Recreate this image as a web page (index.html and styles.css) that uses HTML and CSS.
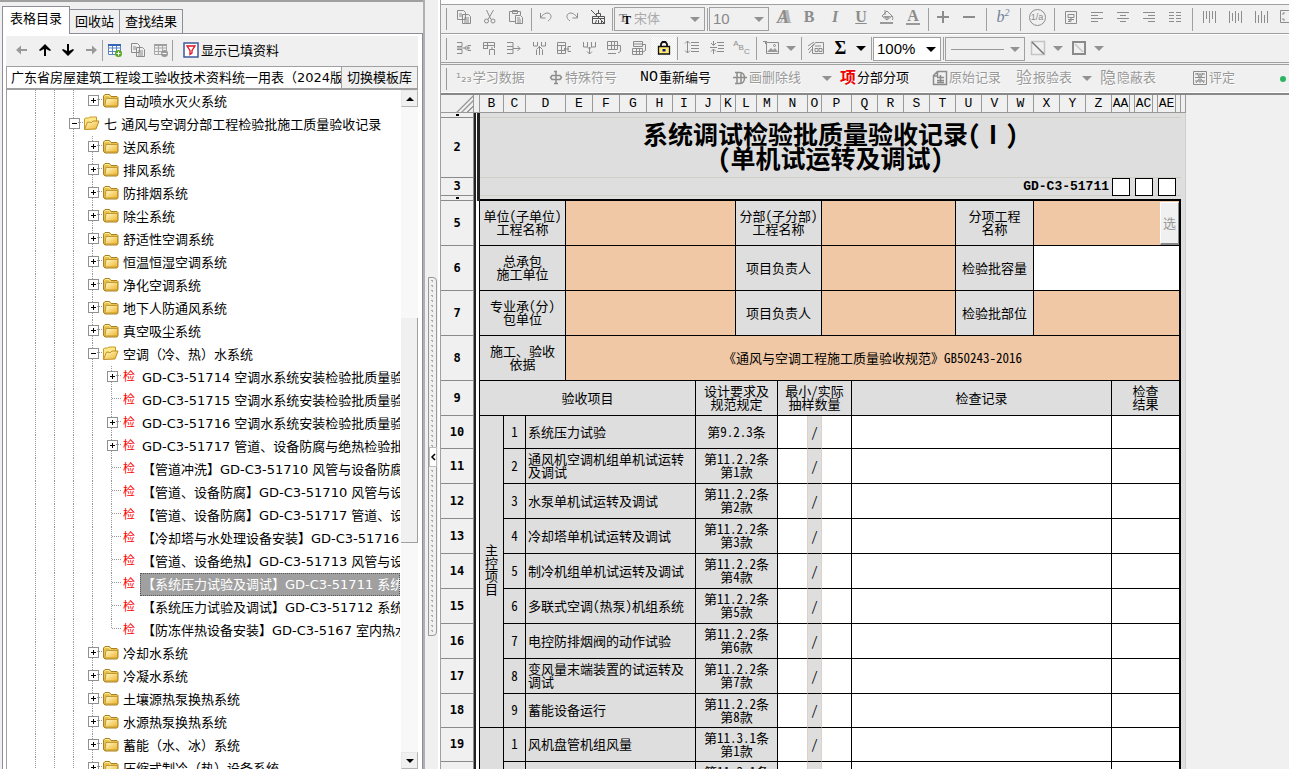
FILE: index.html
```
<!DOCTYPE html>
<html lang="zh-CN">
<head>
<meta charset="utf-8">
<title>系统调试检验批质量验收记录</title>
<link rel="stylesheet" href="styles.css">
</head>
<body>
<svg class="sprite" aria-hidden="true">
  <defs>
    <linearGradient id="gold" x1="0" y1="0" x2="1" y2="1"><stop offset="0" stop-color="#fffbd0"/><stop offset="1" stop-color="#f0b428"/></linearGradient>
  </defs>
  <symbol id="folder" viewBox="0 0 17 15"><path d="M1.500 12.500V3L3 1.500h4.500L9 3.500h6l1 1v8l-1 1.500H3z" fill="#e8c04c" stroke="#a88020"/><path d="M4 5.500h11.500v7.500H3z" fill="url(#gold)" stroke="#c49a30"/><path d="M2.500 3.500L3.500 2.500h3.500l1.500 2" fill="none" stroke="#fff0a0"/></symbol>
  <symbol id="open" viewBox="0 0 17 15"><path d="M1.500 13V3L2.500 2h3l1.500-1h6.500v4" fill="#ffe88a" stroke="#c79a26"/><path d="M1.500 13.500l3-7.500 4 .5 1.500-1.500h6l-3 8z" fill="url(#gold)" stroke="#c08f20"/></symbol>
  <symbol id="left" viewBox="0 0 16 16"><path d="M2 8l5-4.500V7h6v2H7v3.500z" fill="currentColor"/></symbol>
  <symbol id="right" viewBox="0 0 16 16"><path d="M14 8L9 3.500V7H3v2h6v3.500z" fill="currentColor"/></symbol>
  <symbol id="up" viewBox="0 0 16 16"><path d="M8 2L2 8l1 1 4-2v7h2V7l4 2 1-1z" fill="currentColor"/></symbol>
  <symbol id="down" viewBox="0 0 16 16"><path d="M8 14L2 8l1-1 4 2V2h2v7l4-2 1 1z" fill="currentColor"/></symbol>
  <symbol id="gridadd" viewBox="0 0 16 16"><path d="M1.500 2.500h12v10h-12zM1.500 6h12M1.500 9.500h12M5.500 3v10M9.500 3v10" fill="#fff" stroke="#5c83c4"/><path d="M1 2h13v2H1z" fill="#3565b4"/><circle cx="11.500" cy="11.500" r="3.500" fill="#56a820"/><path d="M9.500 11.500h4M11.500 9.500v4" stroke="#fff"/></symbol>
  <symbol id="gridsub" viewBox="0 0 16 16"><path d="M1.500 2.500h12v10h-12zM1.500 6h12M1.500 9.500h12M5.500 3v10M9.500 3v10" fill="none" stroke="#a8a8a8"/><path d="M1 2h13v2H1z" fill="#a0a0a0"/><circle cx="11.500" cy="11.500" r="3.500" fill="#999"/><path d="M9.500 11.500h4" stroke="#fff"/></symbol>
  <symbol id="funnel" viewBox="0 0 16 16"><path d="M1 1h14v14H1z" fill="#fff" stroke="#3e5a9c" stroke-width="1.500"/><path d="M4 4h8L9 8.500V11l-2 1.500v-4z" fill="none" stroke="#e01020" stroke-width="1.300"/></symbol>
  <symbol id="copy" viewBox="0 0 16 16"><path d="M1.500 1.500h6l2 2v7h-8zM6.500 5.500h6l2 2v7h-8z" class="ln pf"/><path d="M3 5h3M3 7h3M8 9h5M8 11h5M8 13h5" class="ln"/></symbol>
  <symbol id="cut" viewBox="0 0 16 16"><path d="M4.500 1l4.500 9.500M11.500 1L6 10.500" class="ln"/><circle cx="4.500" cy="12" r="2" class="ln"/><circle cx="11" cy="12" r="2" class="ln"/></symbol>
  <symbol id="paste" viewBox="0 0 16 16"><path d="M7 12.500H1.500v-10h11V6M4.500 1.500h5v3h-5z" class="ln"/><path d="M7.500 6.500h5l2 2v6h-7zM9 9h3M9 11h4M9 13h4" class="ln"/></symbol>
  <symbol id="undo" viewBox="0 0 16 16"><path d="M2.500 4v5h5M3 8c3-4 7-5 9-3s1 5-2 7" class="ln"/></symbol>
  <symbol id="redo" viewBox="0 0 16 16"><path d="M13.500 4v5h-5M13 8c-3-4-7-5-9-3s-1 5 2 7" class="ln"/></symbol>
  <symbol id="clear" viewBox="0 0 16 16"><path d="M2.500 14.500v-7h12v7zM6.500 7.500v-3h4v3M8.500 1v4M2 9.500h12M5.500 14l1-3M8.500 14v-3M11.500 14v-3M1 1l14 14" class="dk"/></symbol>
  <symbol id="bucket" viewBox="0 0 16 16"><path d="M3 7l5-5 5 5-5 4zM6 1v5M12 6c2 1 2 3 1.500 5" class="ln"/><path d="M4 7h8l-4 3zM1 13h13v2H1z" fill="#999"/></symbol>
  <symbol id="plus" viewBox="0 0 16 16"><path d="M2 8h12M8 2v12" class="ln w2"/></symbol>
  <symbol id="minus" viewBox="0 0 16 16"><path d="M2 8h12" class="ln w2"/></symbol>
  <symbol id="wrap" viewBox="0 0 16 16"><path d="M2.500 2.500h11v12h-11zM5 5.500h6v3H5zM5 10.500h6M8 8.500v4l-2-1M5 12.500h2" class="ln"/></symbol>
  <symbol id="al" viewBox="0 0 16 16"><path d="M2 3.500h12M2 6.500h7M2 9.500h12M2 12.500h7" class="ln"/></symbol>
  <symbol id="ac" viewBox="0 0 16 16"><path d="M2 3.500h12M5 6.500h6M2 9.500h12M5 12.500h6" class="ln"/></symbol>
  <symbol id="ar" viewBox="0 0 16 16"><path d="M2 3.500h12M7 6.500h7M2 9.500h12M7 12.500h7" class="ln"/></symbol>
  <symbol id="aj" viewBox="0 0 16 16"><path d="M2 3.500h5M9 3.500h5M2 6.500h5M9 6.500h5M2 9.500h5M9 9.500h5M2 12.500h5M9 12.500h5" class="ln"/></symbol>
  <symbol id="vt" viewBox="0 0 16 16"><path d="M2.500 2v12M5.500 2v8M8.500 2v12M11.500 2v8M14.500 2v12" class="ln"/></symbol>
  <symbol id="vm" viewBox="0 0 16 16"><path d="M2.500 2v12M5.500 4v8M8.500 2v12M11.500 4v8M14.500 2v12" class="ln"/></symbol>
  <symbol id="vb" viewBox="0 0 16 16"><path d="M2.500 2v12M5.500 6v8M8.500 2v12M11.500 6v8M14.500 2v12" class="ln"/></symbol>
  <symbol id="fit" viewBox="0 0 16 16"><path d="M1.500 1.500h13v12h-13zM4 6V4h2M10 4h2v2M4 9v2h2" class="ln"/></symbol>
  <symbol id="rowins" viewBox="0 0 16 16"><path d="M1 2.500h5v4H1M1 13.500h5v-4H1M1 8h13M11 5.500L8.500 8 11 10.500M15 5.500h-3v5h3" class="ln"/></symbol>
  <symbol id="colins" viewBox="0 0 16 16"><path d="M2.500 8V2.500h11V8M2 5.500h12M6.500 3v5M2 8.500h5M8.500 15V9.500h5V15M11 9V7" class="ln"/></symbol>
  <symbol id="rowadd" viewBox="0 0 16 16"><path d="M1 2.500h6v4H1M1 13.500h6v-4H1M7 6.500v3M7 8.500h7M11.500 6L14 8.500 11.500 11" class="ln"/></symbol>
  <symbol id="coladd" viewBox="0 0 16 16"><path d="M2.500 2v4h4V2M10.500 2v4h4V2M8.500 6v9M6 9l2.500-2.500L11 9M5.500 15V9.500M11.500 15V9.500" class="ln"/></symbol>
  <symbol id="rowdel" viewBox="0 0 16 16"><path d="M1.500 2.500h8v11h-8zM2 5.500h7M2 10.500h7M5.500 6v7M15 6.500h-3v5h3M13 9H8l2-2M8 9l2 2" class="ln"/></symbol>
  <symbol id="coldel" viewBox="0 0 16 16"><path d="M2.500 2v5h4V2M10.500 2v5h4V2M6.500 7l2 2 2-2M8.500 7v7M6 11.500L8.500 14l2.500-2.500" class="ln"/></symbol>
  <symbol id="merge" viewBox="0 0 16 16"><path d="M1.500 1.500h10v8h-10zM1 5.500h11M5.500 2v7M8.500 2v7M2 13.500h8M12 5.500h2.500v6L12 13" class="ln"/></symbol>
  <symbol id="split" viewBox="0 0 16 16"><path d="M2.500 1.500h9v5h-9zM1.500 8.500h10v6h-10zM2 11.500h10M5.500 9v6M8.500 9v6M12 4.500h2.500v6L12 12M3 4h8" class="ln"/></symbol>
  <symbol id="lock" viewBox="0 0 16 16"><path d="M5 7V4l1.500-2h3L11 4v3" fill="none" stroke="#111" stroke-width="1.800"/><path d="M2.500 6.500h11v7.500h-11z" fill="#ffec70" stroke="#111" stroke-width="1.300"/><path d="M6.500 9h3v2.500h-3z" fill="#14148c"/></symbol>
  <symbol id="sp1" viewBox="0 0 16 16"><path d="M3.500 1v12M1 3.500L3.500 1 6 3.500M1 10.500L3.500 13 6 10.500M7 2.500h8M7 5.500h8M7 8.500h8M7 11.500h8" class="ln"/></symbol>
  <symbol id="sp2" viewBox="0 0 16 16"><path d="M4.500 1v4M2 3l2.500 2.500L7 3M4.500 14V9M2 11.500L4.500 9 7 11.500M1 7.500h7M8 2.500h7M9 5.500h6M9 8.500h6M8 11.500h7" class="ln"/></symbol>
  <symbol id="pic" viewBox="0 0 18 16"><path d="M1 1.500h4M3.500 1v3M4.500 2.500h12v11h-12z" class="ln"/><path d="M5 12l4-4 2 2 2-2 3 4z" fill="#999"/><circle cx="12.500" cy="5.500" r="1" class="ln"/></symbol>
  <symbol id="form" viewBox="0 0 18 16"><path d="M5.500 6.500l3-4h8v11h-11zM8 6h6M8 8.500h3v3H8zM12 8.500h3v3h-3zM1 6l6-4M1 10l6-6M2 13l4-5" class="ln"/></symbol>
  <symbol id="diag" viewBox="0 0 16 16"><path d="M1.500 1.500h13v13h-13z" fill="none" stroke="#c4c4c4" stroke-width="1.500"/><path d="M2 2l12 12" stroke="#777" stroke-width="1.500"/></symbol>
  <symbol id="bord" viewBox="0 0 16 16"><path d="M2 2h12v12H2z" fill="none" stroke="#8a8a8a" stroke-width="2"/><path d="M4 4l8 8" stroke="#c4c4c4" stroke-width="1.500"/></symbol>
  <symbol id="phi" viewBox="0 0 16 16"><path d="M4 5.500h8l1.500 2-1.500 2H4l-1.500-2zM8 1v13M6 1.500h3M6 13.500h4" class="ln w15"/></symbol>
  <symbol id="del" viewBox="0 0 16 16"><path d="M3 2.500h5c6 0 6 11 0 11H3M5 2.500v11M9 3v10M1 7.500h14" class="ln w15"/></symbol>
  <symbol id="doc" viewBox="0 0 16 16"><path d="M5.500 1.500h9v13h-13v-9zM5.500 2v4H2M5 7.500h7M5 10.500h7M8.500 5v8M5 12.500h7" class="ln w15"/></symbol>
  <symbol id="eval" viewBox="0 0 16 16"><path d="M1.500 1.500h13v13h-13zM3 4h10M3 7.500h10M3 11h10M5 3l2 4M11 3L9 7M8 4v9M4 13l3-4M12 13l-3-4" class="ln"/></symbol>
</svg>

<div class="app">
  <aside class="side">
    <nav class="tabs">
      <button class="tab on">表格目录</button><button class="tab">回收站</button><button class="tab">查找结果</button>
    </nav>
    <div class="pane">
      <div class="treebar">
        <button class="nb off" aria-label="后退"><svg><use href="#left"/></svg></button>
        <button class="nb" aria-label="上移"><svg><use href="#up"/></svg></button>
        <button class="nb" aria-label="下移"><svg><use href="#down"/></svg></button>
        <button class="nb off" aria-label="前进"><svg><use href="#right"/></svg></button>
        <i class="bar"></i>
        <button class="nb" aria-label="新增表格"><svg><use href="#gridadd"/></svg></button>
        <button class="nb off" aria-label="复制表格"><svg><use href="#copy"/></svg></button>
        <button class="nb" aria-label="删除表格"><svg><use href="#gridsub"/></svg></button>
        <i class="bar"></i>
        <button class="filter"><svg><use href="#funnel"/></svg>显示已填资料</button>
      </div>
      <div class="lib">
        <input type="text" readonly aria-label="模板库" value="广东省房屋建筑工程竣工验收技术资料统一用表（2024版）">
        <button>切换模板库</button>
      </div>
      <div class="treebox">
        <ul class="tree">
          <li class="d3 end"><button class="tog plus" aria-label="展开"></button><svg class="ic"><use href="#folder"/></svg><span class="lb">自动喷水灭火系统</span></li>
          <li class="d2"><button class="tog" aria-label="收起"></button><svg class="ic"><use href="#open"/></svg><span class="lb">七 通风与空调分部工程检验批施工质量验收记录</span></li>
          <li class="d3"><button class="tog plus" aria-label="展开"></button><svg class="ic"><use href="#folder"/></svg><span class="lb">送风系统</span></li>
          <li class="d3"><button class="tog plus" aria-label="展开"></button><svg class="ic"><use href="#folder"/></svg><span class="lb">排风系统</span></li>
          <li class="d3"><button class="tog plus" aria-label="展开"></button><svg class="ic"><use href="#folder"/></svg><span class="lb">防排烟系统</span></li>
          <li class="d3"><button class="tog plus" aria-label="展开"></button><svg class="ic"><use href="#folder"/></svg><span class="lb">除尘系统</span></li>
          <li class="d3"><button class="tog plus" aria-label="展开"></button><svg class="ic"><use href="#folder"/></svg><span class="lb">舒适性空调系统</span></li>
          <li class="d3"><button class="tog plus" aria-label="展开"></button><svg class="ic"><use href="#folder"/></svg><span class="lb">恒温恒湿空调系统</span></li>
          <li class="d3"><button class="tog plus" aria-label="展开"></button><svg class="ic"><use href="#folder"/></svg><span class="lb">净化空调系统</span></li>
          <li class="d3"><button class="tog plus" aria-label="展开"></button><svg class="ic"><use href="#folder"/></svg><span class="lb">地下人防通风系统</span></li>
          <li class="d3"><button class="tog plus" aria-label="展开"></button><svg class="ic"><use href="#folder"/></svg><span class="lb">真空吸尘系统</span></li>
          <li class="d3"><button class="tog" aria-label="收起"></button><svg class="ic"><use href="#open"/></svg><span class="lb">空调（冷、热）水系统</span></li>
          <li class="d4"><button class="tog plus" aria-label="展开"></button><span class="jian">检</span><span class="lb">GD-C3-51714 空调水系统安装检验批质量验收记录</span></li>
          <li class="d4"><span class="tog leaf"></span><span class="jian">检</span><span class="lb">GD-C3-51715 空调水系统安装检验批质量验收记录</span></li>
          <li class="d4"><button class="tog plus" aria-label="展开"></button><span class="jian">检</span><span class="lb">GD-C3-51716 空调水系统安装检验批质量验收记录</span></li>
          <li class="d4"><button class="tog plus" aria-label="展开"></button><span class="jian">检</span><span class="lb">GD-C3-51717 管道、设备防腐与绝热检验批质量验收记录</span></li>
          <li class="d4"><span class="tog leaf"></span><span class="jian">检</span><span class="lb">【管道冲洗】GD-C3-51710 风管与设备防腐检验批</span></li>
          <li class="d4"><span class="tog leaf"></span><span class="jian">检</span><span class="lb">【管道、设备防腐】GD-C3-51710 风管与设备防腐</span></li>
          <li class="d4"><span class="tog leaf"></span><span class="jian">检</span><span class="lb">【管道、设备防腐】GD-C3-51717 管道、设备防腐</span></li>
          <li class="d4"><span class="tog leaf"></span><span class="jian">检</span><span class="lb">【冷却塔与水处理设备安装】GD-C3-51716 空调水系统</span></li>
          <li class="d4"><span class="tog leaf"></span><span class="jian">检</span><span class="lb">【管道、设备绝热】GD-C3-51713 风管与设备绝热</span></li>
          <li class="d4"><span class="tog leaf"></span><span class="jian">检</span><span class="lb sel">【系统压力试验及调试】GD-C3-51711 系统调试</span></li>
          <li class="d4"><span class="tog leaf"></span><span class="jian">检</span><span class="lb">【系统压力试验及调试】GD-C3-51712 系统调试</span></li>
          <li class="d4 end"><span class="tog leaf"></span><span class="jian">检</span><span class="lb">【防冻伴热设备安装】GD-C3-5167 室内热水系统</span></li>
          <li class="d3"><button class="tog plus" aria-label="展开"></button><svg class="ic"><use href="#folder"/></svg><span class="lb">冷却水系统</span></li>
          <li class="d3"><button class="tog plus" aria-label="展开"></button><svg class="ic"><use href="#folder"/></svg><span class="lb">冷凝水系统</span></li>
          <li class="d3"><button class="tog plus" aria-label="展开"></button><svg class="ic"><use href="#folder"/></svg><span class="lb">土壤源热泵换热系统</span></li>
          <li class="d3"><button class="tog plus" aria-label="展开"></button><svg class="ic"><use href="#folder"/></svg><span class="lb">水源热泵换热系统</span></li>
          <li class="d3"><button class="tog plus" aria-label="展开"></button><svg class="ic"><use href="#folder"/></svg><span class="lb">蓄能（水、冰）系统</span></li>
          <li class="d3"><button class="tog plus" aria-label="展开"></button><svg class="ic"><use href="#folder"/></svg><span class="lb">压缩式制冷（热）设备系统</span></li>
        </ul>
        <div class="scroll">
          <button class="sb up" aria-label="向上滚动"></button>
          <div class="track"><div class="thumb"></div></div>
          <button class="sb" aria-label="向下滚动"></button>
        </div>
      </div>
    </div>
  </aside>

  <div class="splitter"><div class="grip"><button aria-label="折叠"><svg viewBox="0 0 6 8"><path d="M5 1L2 4l3 3" fill="none" stroke="#000" stroke-width="1.500"/></svg></button></div></div>

  <main class="main">
    <div class="tools">
      <div class="tb one">
        <i class="hd"></i>
        <button class="b" aria-label="复制"><svg><use href="#copy"/></svg></button>
        <button class="b" aria-label="剪切"><svg><use href="#cut"/></svg></button>
        <button class="b" aria-label="粘贴"><svg><use href="#paste"/></svg></button>
        <i class="sp s4"></i>
        <button class="b" aria-label="撤销"><svg><use href="#undo"/></svg></button>
        <button class="b" aria-label="重做"><svg><use href="#redo"/></svg></button>
        <button class="b" aria-label="清除"><svg><use href="#clear"/></svg></button>
        <i class="sp s3"></i>
        <span class="combo font"><b class="tt"><span>T</span><span>T</span></b><select disabled aria-label="字体"><option>宋体</option></select></span>
        <i class="sp s4"></i>
        <span class="combo size"><select disabled aria-label="字号"><option>10</option></select></span>
        <button class="b ch out">A</button>
        <button class="b ch">B</button>
        <button class="b ch it">I</button>
        <button class="b ch un">U</button>
        <button class="b" aria-label="填充色"><svg><use href="#bucket"/></svg></button>
        <button class="b ch ca"><span>A</span></button>
        <i class="sp s4"></i>
        <button class="b" aria-label="增大"><svg><use href="#plus"/></svg></button>
        <button class="b" aria-label="减小"><svg><use href="#minus"/></svg></button>
        <i class="sp s8"></i>
        <button class="b ch sup">b<sup>2</sup></button>
        <i class="sp s8"></i>
        <button class="b rnd"><span>1/a</span></button>
        <i class="sp s8"></i>
        <button class="b" aria-label="自动换行"><svg><use href="#wrap"/></svg></button>
        <button class="b" aria-label="左对齐"><svg><use href="#al"/></svg></button>
        <button class="b" aria-label="居中"><svg><use href="#ac"/></svg></button>
        <button class="b" aria-label="右对齐"><svg><use href="#ar"/></svg></button>
        <button class="b" aria-label="分散对齐"><svg><use href="#aj"/></svg></button>
        <i class="sp s8"></i>
        <button class="b" aria-label="顶端对齐"><svg><use href="#vt"/></svg></button>
        <button class="b" aria-label="垂直居中"><svg><use href="#vm"/></svg></button>
        <button class="b" aria-label="底端对齐"><svg><use href="#vb"/></svg></button>
        <button class="b" aria-label="自适应"><svg><use href="#fit"/></svg></button>
      </div>
      <div class="tb two">
        <i class="hd"></i>
        <button class="b" aria-label="插入行"><svg><use href="#rowins"/></svg></button>
        <button class="b" aria-label="插入列"><svg><use href="#colins"/></svg></button>
        <button class="b" aria-label="追加行"><svg><use href="#rowadd"/></svg></button>
        <button class="b" aria-label="追加列"><svg><use href="#coladd"/></svg></button>
        <button class="b" aria-label="删除行"><svg><use href="#rowdel"/></svg></button>
        <button class="b" aria-label="删除列"><svg><use href="#coldel"/></svg></button>
        <button class="b" aria-label="合并"><svg><use href="#merge"/></svg></button>
        <button class="b" aria-label="拆分"><svg><use href="#split"/></svg></button>
        <button class="b hat" aria-label="锁定"><svg><use href="#lock"/></svg></button>
        <i class="sp s3"></i>
        <button class="b" aria-label="增大行距"><svg><use href="#sp1"/></svg></button>
        <button class="b" aria-label="减小行距"><svg><use href="#sp2"/></svg></button>
        <button class="b abc"><span>A</span><span>B</span><span>C</span></button>
        <i class="sp s4"></i>
        <button class="b" aria-label="图片"><svg class="wide"><use href="#pic"/></svg></button>
        <button class="dd" aria-label="更多图片选项"></button>
        <i class="sp s4"></i>
        <button class="b" aria-label="表单"><svg class="wide"><use href="#form"/></svg></button>
        <button class="b sigma">Σ</button>
        <button class="dd blk" aria-label="更多函数"></button>
        <i class="sp s4"></i>
        <span class="combo zoom"><select aria-label="缩放"><option>100%</option></select></span>
        <i class="sp s4"></i>
        <span class="combo line"><select disabled aria-label="线型"><option></option></select></span>
        <button class="b" aria-label="斜线"><svg><use href="#diag"/></svg></button>
        <button class="dd" aria-label="更多斜线"></button>
        <button class="b" aria-label="边框"><svg><use href="#bord"/></svg></button>
        <button class="dd" aria-label="更多边框"></button>
      </div>
      <div class="tb three">
        <i class="hd"></i>
        <button class="t w92"><span class="n123">¹₂₃</span>学习数据</button>
        <button class="t w92"><svg><use href="#phi"/></svg>特殊符号</button>
        <button class="t act w92"><span class="no">NO</span>重新编号</button>
        <button class="t w92"><svg><use href="#del"/></svg>画删除线</button>
        <button class="dd" aria-label="更多删除线"></button>
        <button class="t act w92"><span class="big red">项</span>分部分项</button>
        <button class="t w84"><svg><use href="#doc"/></svg>原始记录</button>
        <button class="t w68"><span class="big">验</span>报验表</button>
        <button class="dd" aria-label="更多报验表"></button>
        <button class="t w92"><span class="big">隐</span>隐蔽表</button>
        <button class="t w68"><svg><use href="#eval"/></svg>评定</button>
        <i class="dot"></i>
      </div>
    </div>
    <div class="sheet">
      <table>
        <colgroup>
          <col class="c33"><col class="c6"><col class="c24"><col class="c22"><col class="c40"><col class="c27"><col class="c27"><col class="c27"><col class="c26"><col class="c23"><col class="c25"><col class="c15"><col class="c21"><col class="c21"><col class="c30"><col class="c14"><col class="c30">
          <col class="c26" span="10">
          <col class="c18"><col class="c5"><col class="c18"><col class="c5"><col class="c18"><col class="c5"><col class="c5">
        </colgroup>
        <thead>
          <tr class="hh"><th class="corner"></th><th></th><th>B</th><th>C</th><th>D</th><th>E</th><th>F</th><th>G</th><th>H</th><th>I</th><th>J</th><th>K</th><th>L</th><th>M</th><th>N</th><th>O</th><th>P</th><th>Q</th><th>R</th><th>S</th><th>T</th><th>U</th><th>V</th><th>W</th><th>X</th><th>Y</th><th>Z</th><th>AA</th><th></th><th>AC</th><th></th><th>AE</th><th></th><th></th></tr>
        </thead>
        <tbody>
          <tr class="h5"><th class="tiny"></th><td class="a top" rowspan="4"></td><td class="q" colspan="31"></td><td class="g"></td></tr>
          <tr class="h60"><th>2</th><td class="q title" colspan="31">系统调试检验批质量验收记录(Ⅰ)<br>(单机试运转及调试)</td><td class="g"></td></tr>
          <tr class="h18"><th>3</th><td class="q code" colspan="25">GD-C3-51711</td><td class="box"></td><td class="q"></td><td class="box"></td><td class="q"></td><td class="box"></td><td class="q"></td><td class="g"></td></tr>
          <tr class="h5"><th class="tiny"></th><td class="q thick" colspan="31"></td><td class="g"></td></tr>
          <tr class="h45"><th>5</th><td class="a"></td><td colspan="3">单位(子单位)<br>工程名称</td><td class="o" colspan="7"></td><td colspan="4">分部(子分部)<br>工程名称</td><td class="o" colspan="5"></td><td colspan="3">分项工程<br>名称</td><td class="o r pick" colspan="9"><button>选</button></td><td class="g"></td></tr>
          <tr class="h45"><th>6</th><td class="a"></td><td colspan="3">总承包<br>施工单位</td><td class="o" colspan="7"></td><td colspan="4">项目负责人</td><td class="o" colspan="5"></td><td colspan="3">检验批容量</td><td class="w r" colspan="9"></td><td class="g"></td></tr>
          <tr class="h45"><th>7</th><td class="a"></td><td colspan="3">专业承(分)<br>包单位</td><td class="o" colspan="7"></td><td colspan="4">项目负责人</td><td class="o" colspan="5"></td><td colspan="3">检验批部位</td><td class="o r" colspan="9"></td><td class="g"></td></tr>
          <tr class="h45"><th>8</th><td class="a"></td><td colspan="3">施工、验收<br>依据</td><td class="o r" colspan="28">《通风与空调工程施工质量验收规范》GB50243-2016</td><td class="g"></td></tr>
          <tr class="h35"><th>9</th><td class="a"></td><td colspan="8">验收项目</td><td colspan="4">设计要求及<br>规范规定</td><td colspan="3">最小/实际<br>抽样数量</td><td colspan="10">检查记录</td><td class="r" colspan="6">检查<br>结果</td><td class="g"></td></tr>
          <tr class="h33"><th>10</th><td class="a"></td><td rowspan="9"><span class="vert">主控项目</span></td><td>1</td><td class="l" colspan="6">系统压力试验</td><td colspan="4">第9.2.3条</td><td class="w n"></td><td class="n s">/</td><td class="w"></td><td class="w" colspan="10"></td><td class="w r" colspan="6"></td><td class="g"></td></tr>
          <tr class="h35"><th>11</th><td class="a"></td><td>2</td><td class="l" colspan="6">通风机空调机组单机试运转及调试</td><td colspan="4">第11.2.2条<br>第1款</td><td class="w n"></td><td class="n s">/</td><td class="w"></td><td class="w" colspan="10"></td><td class="w r" colspan="6"></td><td class="g"></td></tr>
          <tr class="h35"><th>12</th><td class="a"></td><td>3</td><td class="l" colspan="6">水泵单机试运转及调试</td><td colspan="4">第11.2.2条<br>第2款</td><td class="w n"></td><td class="n s">/</td><td class="w"></td><td class="w" colspan="10"></td><td class="w r" colspan="6"></td><td class="g"></td></tr>
          <tr class="h35"><th>13</th><td class="a"></td><td>4</td><td class="l" colspan="6">冷却塔单机试运转及调试</td><td colspan="4">第11.2.2条<br>第3款</td><td class="w n"></td><td class="n s">/</td><td class="w"></td><td class="w" colspan="10"></td><td class="w r" colspan="6"></td><td class="g"></td></tr>
          <tr class="h35"><th>14</th><td class="a"></td><td>5</td><td class="l" colspan="6">制冷机组单机试运转及调试</td><td colspan="4">第11.2.2条<br>第4款</td><td class="w n"></td><td class="n s">/</td><td class="w"></td><td class="w" colspan="10"></td><td class="w r" colspan="6"></td><td class="g"></td></tr>
          <tr class="h35"><th>15</th><td class="a"></td><td>6</td><td class="l" colspan="6">多联式空调(热泵)机组系统</td><td colspan="4">第11.2.2条<br>第5款</td><td class="w n"></td><td class="n s">/</td><td class="w"></td><td class="w" colspan="10"></td><td class="w r" colspan="6"></td><td class="g"></td></tr>
          <tr class="h35"><th>16</th><td class="a"></td><td>7</td><td class="l" colspan="6">电控防排烟阀的动作试验</td><td colspan="4">第11.2.2条<br>第6款</td><td class="w n"></td><td class="n s">/</td><td class="w"></td><td class="w" colspan="10"></td><td class="w r" colspan="6"></td><td class="g"></td></tr>
          <tr class="h35"><th>17</th><td class="a"></td><td>8</td><td class="l" colspan="6">变风量末端装置的试运转及调试</td><td colspan="4">第11.2.2条<br>第7款</td><td class="w n"></td><td class="n s">/</td><td class="w"></td><td class="w" colspan="10"></td><td class="w r" colspan="6"></td><td class="g"></td></tr>
          <tr class="h34"><th>18</th><td class="a"></td><td>9</td><td class="l" colspan="6">蓄能设备运行</td><td colspan="4">第11.2.2条<br>第8款</td><td class="w n"></td><td class="n s">/</td><td class="w"></td><td class="w" colspan="10"></td><td class="w r" colspan="6"></td><td class="g"></td></tr>
          <tr class="h34"><th>19</th><td class="a"></td><td rowspan="2"></td><td>1</td><td class="l" colspan="6">风机盘管机组风量</td><td colspan="4">第11.3.1条<br>第1款</td><td class="w n"></td><td class="n s">/</td><td class="w"></td><td class="w" colspan="10"></td><td class="w r" colspan="6"></td><td class="g"></td></tr>
          <tr class="h34"><th>20</th><td class="a"></td><td>2</td><td class="l" colspan="6"></td><td colspan="4">第11.3.1条<br>第2款</td><td class="w n"></td><td class="n s">/</td><td class="w"></td><td class="w" colspan="10"></td><td class="w r" colspan="6"></td><td class="g"></td></tr>
        </tbody>
      </table>
    </div>
  </main>
</div>
</body>
</html>
```
FILE: styles.css
```
* { box-sizing: border-box; }
html, body { height: 100%; margin: 0; overflow: hidden; }
body { background: #f0f0f0; color: #000; font: 13px/23px "DejaVu Sans", "Noto Sans CJK SC", sans-serif; }
button, input, select { font: inherit; color: inherit; margin: 0; padding: 0; border: 0; background: none; border-radius: 0; }
button { display: inline-flex; align-items: center; justify-content: center; flex: none; white-space: nowrap; }
ul { margin: 0; padding: 0; list-style: none; }
svg { display: block; flex: none; width: 16px; height: 16px; }
.sprite { position: absolute; width: 0; height: 0; }
.ln { fill: none; stroke: #8c8c8c; }
.pf { fill: #f0f0f0; }
.dk { fill: none; stroke: #555; }
.w2 { stroke-width: 2; }
.w15 { stroke-width: 1.5; }
.app { display: flex; height: 100vh; }

/* side panel */
.side { flex: 0 0 423px; min-width: 0; display: flex; flex-direction: column; padding: 4px 0 0 2px; border-top: 2px solid #a0a0a0; }
.tabs { display: flex; align-items: flex-end; height: 27px; flex: none; }
.tab { height: 24px; padding: 0 5px; border: 1px solid #8c8f98; border-left: 0; border-bottom: 0; }
.tab.on { height: 28px; width: 68px; background: #fff; border-left: 1px solid #8c8f98; padding-bottom: 4px; position: relative; margin-bottom: -1px; z-index: 1; }
.pane { flex: 1; min-height: 0; display: flex; flex-direction: column; background: #fff; border: 1px solid #8c8f98; border-bottom: 0; padding: 2px 4px 0 3px; }
.treebar { display: flex; align-items: center; height: 30px; flex: none; background: #f0f0f0; padding: 0 0 2px 4px; }
.nb { width: 23px; height: 24px; color: #000; }
.nb.off { color: #999; }
.bar { width: 1px; height: 21px; background: #a0a0a0; }
.filter { gap: 2px; margin-left: 10px; }
.lib { display: flex; height: 23px; flex: none; border: 1px solid #a0a0a0; }
.lib input { flex: 1; min-width: 0; padding-left: 4px; outline: 0; }
.lib button { width: 76px; background: #f0f0f0; border-left: 1px solid #a0a0a0; }
.treebox { flex: 1; min-height: 0; display: flex; border-top: 1px solid #a0a0a0; border-left: 1px solid #a0a0a0; }
.tree { flex: 1; min-width: 0; overflow: hidden; padding-right: 1px; }
.tree li { display: flex; height: 23px; overflow: hidden; background-image: linear-gradient(#999 1px, transparent 1px), linear-gradient(#999 1px, transparent 1px), linear-gradient(#999 1px, transparent 1px), linear-gradient(#999 1px, transparent 1px); background-size: 1px 2px; background-repeat: repeat-y; }
.tree .d2 { padding-left: 57px; background-position: 28px 0, 47px 0, -9px 0, -9px 0; }
.tree .d3 { padding-left: 76px; background-position: 28px 0, 47px 0, 66px 0, -9px 0; }
.tree .d4 { padding-left: 95px; background-position: 28px 0, 47px 0, 66px 0, 85px 0; }
.tog { position: relative; flex: 0 0 19px; height: 23px; display: block; background: linear-gradient(#999 1px, transparent 1px) 9px 0 / 1px 2px repeat-y; }
.end .tog { background: none; }
.tog::before { content: ""; position: absolute; left: 5px; top: 5px; width: 9px; height: 9px; border: 1px solid #919191; background: linear-gradient(#000, #000) center / 5px 1px no-repeat, #fff; }
.tog.plus::before { background: linear-gradient(#000, #000) center / 5px 1px no-repeat, linear-gradient(#000, #000) center / 1px 5px no-repeat, #fff; }
.tog::after { content: ""; position: absolute; left: 14px; top: 9px; width: 5px; border-top: 1px dotted #999; }
.tog.leaf::before { display: none; }
.tog.leaf::after { left: 10px; width: 9px; }
.end .tog.leaf::before { display: block; left: 9px; top: 0; width: 1px; height: 10px; border: 0; background: linear-gradient(#999 1px, transparent 1px) 0 0 / 1px 2px; }
.ic { width: 17px; height: 15px; margin: 3px 2px 0 0; }
.jian { flex: 0 0 19px; padding-left: 2px; font-size: 12px; color: #f00; line-height: 23px; }
.lb { padding-left: 2px; white-space: nowrap; flex: 1 0 0; min-width: 0; }
.sel { background: #a0a0a0; color: #fff; outline: 1px dotted #555; outline-offset: -1px; overflow: hidden; }
.scroll { flex: 0 0 17px; display: flex; flex-direction: column; }
.sb { height: 17px; background: #f0f0f0; border: 1px solid #b4b4b4; border-left-color: #e8e8e8; border-top-color: #e8e8e8; }
.sb::before { content: ""; border: 4px solid transparent; border-bottom: 0; border-top-color: #000; }
.sb.up::before { border-top: 0; border-bottom: 4px solid #000; }
.track { flex: 1; background: #f8f8f8; display: flex; flex-direction: column; }
.track::before { content: ""; flex: 211; }
.track::after { content: ""; flex: 209; }
.thumb { flex: 224; background: #f0f0f0; border-right: 1px solid #a0a0a0; border-bottom: 1px solid #a0a0a0; }

/* splitter */
.splitter { flex: 0 0 17px; display: flex; flex-direction: column; border-right: 2px solid #fff; border-left: 2px solid #b0b0b0; padding-left: 3px; }
.splitter::before { content: ""; flex: 278; }
.splitter::after { content: ""; flex: 133; }
.grip { flex: 358; width: 9px; border: 1px solid #999; border-radius: 0 4px 4px 0; background: radial-gradient(circle, #aaa 1px, transparent 1px) 0 0 / 7px 5px; display: flex; align-items: center; }
.grip button { width: 8px; height: 20px; background: #fff; border: 1px solid #bbb; }
.grip svg { width: 6px; height: 8px; }

/* toolbars */
.main { flex: 1; min-width: 0; display: flex; flex-direction: column; border-left: 1px solid #a0a0a0; }
.tools { flex: none; border-top: 4px solid #fcfcfc; background: #f0f0f0; overflow: hidden; }
.tb { display: flex; align-items: center; height: 30px; border-top: 1px solid #a0a0a0; border-bottom: 1px solid #a0a0a0; padding-left: 3px; }
.one .b { padding-bottom: 4px; }
.two { height: 29px; border-top-color: #fff; }
.two .b { width: 25px; padding-bottom: 2px; }
.three { height: 29px; margin-top: 1px; border-bottom-color: #fff; }
.hd { flex: none; width: 3px; height: 22px; border-right: 1px solid #999; margin-right: 4px; }
.b { width: 26px; height: 24px; color: #8c8c8c; }
.sp { flex: none; height: 23px; background: linear-gradient(#a0a0a0, #a0a0a0) center / 1px 100% no-repeat; }
.s3 { width: 3px; }
.s4 { width: 4px; }
.s8 { width: 8px; }
.b .wide { width: 18px; }
.ch { font: bold 16px/20px "Liberation Serif", serif; }
.it { font-style: italic; }
.un { text-decoration: underline; }
.out { font-style: italic; font-size: 18px; text-shadow: 3px 0 #b4b4b4; }
.ca span { border-bottom: 2px solid #999; line-height: 14px; padding: 0 1px; }
.sup { font-style: italic; font-weight: normal; color: #6f8199; }
.sup sup { font-size: 10px; margin-top: -8px; line-height: 10px; }
.rnd span { width: 17px; height: 17px; border: 1px solid #8c8c8c; border-radius: 50%; font: 9px/15px "Liberation Sans", sans-serif; text-align: center; }
.combo { position: relative; display: flex; flex: none; align-items: center; height: 24px; border: 1px solid #a0a0a0; color: #888; }
.combo select { appearance: none; flex: 1; min-width: 0; height: 22px; padding: 0 3px; outline: 0; font: 15px/22px "Liberation Sans", "Noto Sans CJK SC", sans-serif; opacity: 1; }
.combo::after { content: ""; position: absolute; right: 4px; top: 9px; border: 5px solid transparent; border-bottom: 0; border-top-color: #929292; }
.font { width: 91px; }
.font select { font-size: 13px; color: #aaa; }
.size { width: 60px; margin-right: 1px; }
.tt { display: flex; font: bold 12px/14px "Liberation Serif", serif; color: #888; padding-left: 4px; }
.tt span + span { color: #000; margin: 2px 0 0 -4px; }
.zoom { width: 68px; background: #fff; color: #000; }
.zoom::after { border-top-color: #000; }
.line { width: 80px; }
.line select { background: linear-gradient(#999, #999) 5px 11px / 53px 1px no-repeat; }
.dd { width: 16px; height: 24px; }
.dd::before { content: ""; border: 5px solid transparent; border-bottom: 0; border-top-color: #929292; }
.dd.blk::before { border-top-color: #000; }
.hat { background: repeating-conic-gradient(#fff 0 25%, #ececec 0 50%) 0 0 / 2px 2px; }
.abc { font: 8px/8px "Liberation Sans", sans-serif; }
.abc span:first-child { margin-top: -8px; }
.abc span:last-child { margin-top: 8px; }
.sigma { color: #000; font: bold 18px/20px "Liberation Serif", serif; }
.t { justify-content: flex-start; gap: 1px; color: #999; text-shadow: 1px 1px #fff; padding: 0 0 2px 5px; }
.act { color: #000; }
.w92 { width: 92px; }
.w84 { width: 84px; }
.w68 { width: 68px; }
.n123 { font-size: 13px; }
.no { font: 15px/20px "Liberation Mono", monospace; }
.big { font-size: 16px; line-height: 20px; }
.red { color: #e00; font-weight: bold; }
.dot { flex: none; width: 6px; height: 6px; border-radius: 50%; background: #2db462; margin-left: 25px; }

/* spreadsheet */
.sheet { flex: 1; min-height: 0; overflow: hidden; border-top: 2px solid #888; }
table { table-layout: fixed; width: 745px; border-collapse: separate; border-spacing: 0; font: 13px/13px "Noto Sans Mono CJK SC", "Noto Sans CJK SC", sans-serif; }
.c33 { width: 33px; } .c6 { width: 6px; } .c24 { width: 24px; } .c22 { width: 22px; } .c40 { width: 40px; }
.c27 { width: 27px; } .c26 { width: 26px; } .c23 { width: 23px; } .c25 { width: 25px; } .c15 { width: 15px; }
.c21 { width: 21px; } .c30 { width: 30px; } .c14 { width: 14px; } .c18 { width: 18px; } .c5 { width: 5px; }
th, td { padding: 0; text-align: center; vertical-align: middle; border: 0 solid #000; border-width: 0 1px 1px 0; background: #dedede; }
.h33 td, .h34 td, .h35 td, .h45 td { padding-bottom: 2px; }
th { background: #f0f0f0; border-color: #8a8a8a; font: bold 12px/13px "DejaVu Sans Mono", monospace; }
thead th { font: 13px/16px "Liberation Mono", monospace; border-color: #999; }
.corner { background: linear-gradient(135deg, transparent 65%, #999 66% 69%, transparent 70% 75%, #999 76% 79%, transparent 80% 86%, #999 87% 90%, transparent 91%) #f0f0f0; }
.hh { height: 18px; } .h5 { height: 5px; } .h60 { height: 60px; } .h18 { height: 18px; } .h45 { height: 45px; }
.h35 { height: 35px; } .h33 { height: 33px; } .h34 { height: 34px; }
.tiny { background: linear-gradient(#000, #000) center / 3px 2px no-repeat #f0f0f0; }
.a { background: #fff; border-left: 2px solid #222; border-bottom: 0; }
.a.top { border-left-width: 2px; border-right: 3px solid #222; }
.q { border-color: #d0d0c8; border-right-width: 0; }
.g { border-color: #d4ccc8; border-bottom: 0; }
.thick { border-bottom: 2px solid #000; }
.title { font-size: 25px; line-height: 24px; font-weight: bold; padding-bottom: 5px; }
.code { text-align: right; padding-right: 3px; font: bold 13px/15px "Liberation Mono", monospace; }
.box { background: #fff; outline: 1px solid #000; outline-offset: -1px; border: 0; }
.o { background: #f0c8a5; }
.w { background: #fff; }
.r { border-right-width: 2px; }
.l { text-align: left; padding: 0 2px; }
.n { border-right-color: #dcd0c8; }
.vert { writing-mode: vertical-rl; }
.h45 .pick { text-align: right; padding: 0; }
.pick button { width: 19px; height: 43px; background: #f0f0f0; border: 1px solid #fff; border-right-color: #888; border-bottom: 2px solid #888; color: #999; vertical-align: top; }
```
